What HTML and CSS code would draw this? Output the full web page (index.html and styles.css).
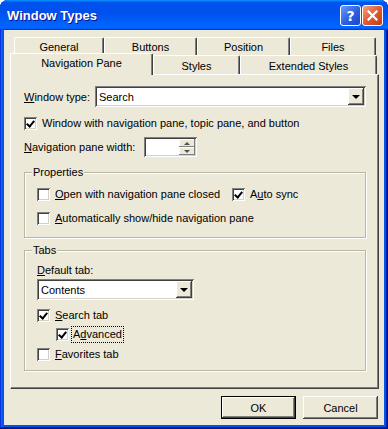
FILE: index.html
```html
<!DOCTYPE html>
<html lang="en">
<head>
    <meta charset="UTF-8">
    <meta name="viewport" content="width=device-width, initial-scale=1.0">
    <title>Window Types</title>
    <link rel="stylesheet" href="styles.css">
</head>
<body>
    <div class="window">
        <div class="titlebar">
            <span class="title">Window Types</span>
            <span class="title-btn help">?</span>
            <span class="title-btn close">
                <svg width="11" height="11" viewBox="0 0 11 11"><path d="M1.5 1.5L9.5 9.5M9.5 1.5L1.5 9.5" stroke="#fff" stroke-width="2.2" stroke-linecap="square"/></svg>
            </span>
        </div>

        <div class="client">
            <!-- tab strip: back row, then the row holding the selected tab -->
            <div class="tab-row back">
                <div class="tab tab-general">General</div>
                <div class="tab tab-buttons">Buttons</div>
                <div class="tab tab-position">Position</div>
                <div class="tab tab-files">Files</div>
            </div>
            <div class="tab-row front">
                <div class="tab tab-nav active">Navigation Pane</div>
                <div class="tab tab-styles">Styles</div>
                <div class="tab tab-extended">Extended Styles</div>
            </div>

            <div class="panel">
                <div class="field field-type">
                    <span class="field-label type-label"><u>W</u>indow type:</span>
                    <div class="combo combo-type">
                        <span class="combo-text">Search</span>
                        <span class="drop-btn"></span>
                    </div>
                </div>

                <div class="check-row nav-check">
                    <span class="cb on"></span>Window with navigation pane, topic pane, and button
                </div>

                <div class="field field-width">
                    <span class="field-label width-label"><u>N</u>avigation pane width:</span>
                    <div class="spin">
                        <div class="spin-btns">
                            <span class="spin-up"></span>
                            <span class="spin-down"></span>
                        </div>
                    </div>
                </div>

                <div class="group group-props">
                    <div class="group-title">Properties</div>
                    <div class="check-row props-first">
                        <span class="check-item wide"><span class="cb"></span><u>O</u>pen with navigation pane closed</span>
                        <span class="check-item"><span class="cb on"></span>A<u>u</u>to sync</span>
                    </div>
                    <div class="check-row props-second">
                        <span class="cb"></span><u>A</u>utomatically show/hide navigation pane
                    </div>
                </div>

                <div class="group group-tabs">
                    <div class="group-title">Tabs</div>
                    <div class="default-label"><u>D</u>efault tab:</div>
                    <div class="combo combo-default">
                        <span class="combo-text">Contents</span>
                        <span class="drop-btn"></span>
                    </div>
                    <div class="check-row search-check">
                        <span class="cb on"></span><u>S</u>earch tab
                    </div>
                    <div class="check-row advanced-check">
                        <span class="cb on"></span><span class="focus">A<u>d</u>vanced</span>
                    </div>
                    <div class="check-row favorites-check">
                        <span class="cb"></span><u>F</u>avorites tab
                    </div>
                </div>
            </div>

            <div class="buttons">
                <button class="btn default">OK</button>
                <button class="btn">Cancel</button>
            </div>
        </div>
    </div>
</body>
</html>
```

FILE: styles.css
```css
body {
    margin: 0;
    background: #fff;
    font-family: "Liberation Sans", Arial, sans-serif;
    font-size: 11px;
    color: #000;
}

.window {
    width: 388px;
    height: 429px;
    box-sizing: border-box;
    display: flex;
    flex-direction: column;
    background: #0055ea;
    border-radius: 8px 8px 0 0;
    box-shadow: inset -1px -1px #00138c, inset 1px 1px #0831d9, inset -2px -2px #001ea0, inset 2px 2px #166aee;
}

/* title bar */
.titlebar {
    height: 30px;
    box-sizing: border-box;
    display: flex;
    align-items: flex-start;
    padding: 0 5px 0 7px;
    border-radius: 8px 8px 0 0;
    background: linear-gradient(180deg, #0997ff, #0053ee 8%, #0050ee 40%, #06f 88%, #06f 93%, #005bff 95%, #003dd7 96%, #003dd7);
}

.title {
    flex: 1;
    margin-top: 8px;
    line-height: 15px;
    color: #fff;
    font-weight: bold;
    font-size: 13px;
    text-shadow: 1px 1px #0f1089;
}

.title-btn {
    width: 21px;
    height: 21px;
    margin-top: 5px;
    box-sizing: border-box;
    border: 1px solid #fff;
    border-radius: 3px;
    display: flex;
    align-items: center;
    justify-content: center;
}

.help {
    margin-right: 1px;
    background: linear-gradient(135deg, #6a9cfa, #2a5fe0 55%, #1b47c6);
    color: #fff;
    font-family: "DejaVu Sans", sans-serif;
    font-weight: bold;
    font-size: 14px;
    line-height: 1;
}

.close {
    background: linear-gradient(135deg, #f3a283, #e05a33 50%, #c63c14);
}

/* dialog area */
.client {
    flex: 1;
    margin: 0 4px 4px;
    padding-top: 7px;
    background: #ece9d8;
}

/* tabs */
.tab-row {
    display: flex;
}

.tab-row.back {
    margin-left: 10px;
    height: 18px;
}

.tab-row.front {
    margin-left: 6px;
    height: 19px;
}

.tab {
    box-sizing: border-box;
    text-align: center;
    line-height: 13px;
    background: #ece9d8;
    border-top: 1px solid #fff;
    border-left: 1px solid #fff;
    border-right: 1px solid #404040;
    border-radius: 2px 2px 0 0;
    box-shadow: inset -1px 0 #808080;
}

.back .tab {
    height: 18px;
    padding-top: 3px;
}

.front .tab {
    height: 19px;
    padding-top: 4px;
}

.front .tab.active {
    height: 22px;
    margin-top: -2px;
    margin-bottom: -1px;
    padding-top: 3px;
    position: relative;
    z-index: 1;
}

.tab-general { width: 90px; }
.tab-buttons { width: 93px; }
.tab-position { width: 93px; }
.tab-files { width: 86px; }
.tab-nav { width: 143px; }
.tab-styles { width: 87px; }
.tab-extended { width: 137px; }

.panel {
    margin-left: 6px;
    width: 369px;
    box-sizing: border-box;
    padding: 11px 12px 17px 13px;
    border: 1px solid;
    border-color: #fff #404040 #404040 #fff;
    box-shadow: inset -1px -1px #808080;
}

/* form rows */
.field {
    display: flex;
    align-items: center;
}

.field-type {
    height: 21px;
}

.type-label {
    width: 71px;
}

.field-width {
    height: 20px;
    margin-top: 6px;
}

.width-label {
    width: 120px;
}

.check-row {
    display: flex;
    align-items: center;
    height: 16px;
}

.check-item {
    display: flex;
    align-items: center;
}

.check-item.wide {
    width: 195px;
}

.nav-check { margin-top: 8px; }
.props-first { margin-top: 7px; }
.props-second { margin-top: 8px; }
.search-check { margin-top: 7px; }
.advanced-check { margin-top: 3px; padding-left: 19px; }
.favorites-check { margin-top: 4px; }

/* checkbox */
.cb {
    flex: none;
    position: relative;
    width: 13px;
    height: 13px;
    margin-right: 5px;
    box-sizing: border-box;
    background: #fff;
    box-shadow: inset 1px 1px #808080, inset -1px -1px #fff, inset 2px 2px #404040, inset -2px -2px #d4d0c8;
}

.cb.on::after {
    content: "";
    position: absolute;
    left: 4px;
    top: 2px;
    width: 3px;
    height: 6px;
    border: solid #000;
    border-width: 0 2px 2px 0;
    transform: rotate(40deg);
}

.advanced-check .cb {
    margin-right: 3px;
}

.focus {
    outline: 1px dotted #000;
    padding: 0 1px;
    line-height: 15px;
}

/* combo boxes */
.combo {
    display: flex;
    align-items: center;
    height: 21px;
    box-sizing: border-box;
    padding: 2px;
    background: #fff;
    box-shadow: inset 1px 1px #808080, inset -1px -1px #fff, inset 2px 2px #404040, inset -2px -2px #d4d0c8;
}

.combo-type {
    width: 271px;
}

.combo-default {
    width: 157px;
    margin-top: 2px;
}

.combo-text {
    flex: 1;
    padding-left: 2px;
}

.drop-btn {
    width: 16px;
    height: 17px;
    display: flex;
    align-items: center;
    justify-content: center;
    background: #ece9d8;
    box-shadow: inset -1px -1px #404040, inset 1px 1px #fff, inset -2px -2px #808080;
}

.drop-btn::after {
    content: "";
    border-left: 4px solid transparent;
    border-right: 4px solid transparent;
    border-top: 4px solid #000;
    margin-top: 1px;
}

/* spin box */
.spin {
    width: 53px;
    height: 20px;
    box-sizing: border-box;
    padding: 2px;
    display: flex;
    justify-content: flex-end;
    background: #fff;
    box-shadow: inset 1px 1px #808080, inset -1px -1px #fff, inset 2px 2px #404040, inset -2px -2px #d4d0c8;
}

.spin-btns {
    width: 16px;
    display: flex;
    flex-direction: column;
}

.spin-up,
.spin-down {
    flex: 1;
    display: flex;
    align-items: center;
    justify-content: center;
    background: #ece9d8;
    box-shadow: inset -1px -1px #808080, inset 1px 1px #fff;
}

.spin-up::after {
    content: "";
    border-left: 3px solid transparent;
    border-right: 3px solid transparent;
    border-bottom: 3px solid #505050;
}

.spin-down::after {
    content: "";
    border-left: 3px solid transparent;
    border-right: 3px solid transparent;
    border-top: 3px solid #505050;
}

/* group boxes */
.group {
    padding: 0 12px;
    border: 1px solid #b9b6a6;
    box-shadow: inset 1px 1px #fff, 1px 1px #fff;
}

.group-props {
    margin-top: 15px;
    padding-bottom: 11px;
}

.group-tabs {
    margin-top: 12px;
    padding-bottom: 8px;
}

.group-title {
    display: table;
    margin: -7px 0 0 -5px;
    padding: 0 1px;
    line-height: 13px;
    background: #ece9d8;
}

.default-label {
    margin-top: 6px;
    line-height: 14px;
}

/* dialog buttons */
.buttons {
    display: flex;
    justify-content: flex-end;
    gap: 7px;
    margin-top: 7px;
    padding-right: 6px;
}

.btn {
    width: 75px;
    height: 23px;
    box-sizing: border-box;
    padding: 0;
    border: none;
    font: inherit;
    color: #000;
    background: #ece9d8;
    box-shadow: inset -1px -1px #404040, inset 1px 1px #fff, inset -2px -2px #808080;
}

.btn.default {
    border: 1px solid #000;
}
```
